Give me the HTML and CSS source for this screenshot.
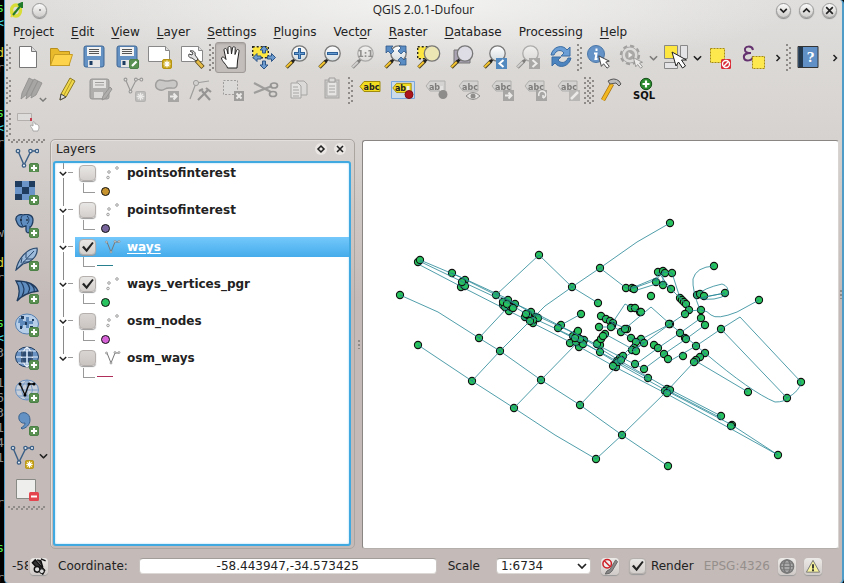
FILE: index.html
```html
<!DOCTYPE html>
<html lang="en">
<head>
<meta charset="utf-8">
<title>QGIS 2.0.1-Dufour</title>
<link rel="stylesheet" href="styles.css">
</head>
<body>
<svg class="defs" aria-hidden="true">
  <defs>
    <linearGradient id="lens" x1="0" y1="0" x2="0" y2="1"><stop offset="0" stop-color="#fff"/><stop offset="1" stop-color="#d3dbde"/></linearGradient>
    <symbol id="plus" viewBox="0 0 10 10"><rect x=".5" y=".5" width="9" height="9" rx="1.5" fill="#5a9152" stroke="#4b8046"/><path d="M5 2v6M2 5h6" stroke="#fff" stroke-width="2"/></symbol>
    <symbol id="star" viewBox="0 0 10 10"><rect x=".5" y=".5" width="9" height="9" rx="1.5" fill="#cda91c" stroke="#b49213"/><path d="M5 1.5v7M1.5 5h7M2.6 2.6l4.8 4.8M7.4 2.6L2.6 7.4" stroke="#fff" stroke-width="1.2"/></symbol>
    <symbol id="handle" viewBox="0 0 24 24"><path d="M1.500 22.500L8 16" stroke="#4d4321" stroke-width="3.600"/><path d="M1.500 22L7 16.700" stroke="#f4c430" stroke-width="2"/><path d="M7 17l3-3" stroke="#222" stroke-width="2.600"/></symbol>
    <symbol id="glass" viewBox="0 0 24 24"><use href="#handle"/><circle cx="14.500" cy="8.500" r="7.700" fill="url(#lens)" stroke="#777" stroke-width="1.300"/></symbol>
    <symbol id="vee" viewBox="0 0 24 24"><path d="M3 3l6 14 7-14h6" fill="none" stroke="#3c5f86" stroke-width="1.400"/><g fill="#e8eef4" stroke="#3c5f86" stroke-width="1.300"><circle cx="3" cy="3" r="1.700"/><circle cx="9" cy="17.500" r="1.700"/><circle cx="15.500" cy="3" r="1.700"/><circle cx="22" cy="3" r="1.700"/></g></symbol>
    <symbol id="tag" viewBox="0 0 24 24"><path d="M2 12.500L6 7.500h16v10H6z" fill="#f2dc21" stroke="#a08b0c"/></symbol>
    <symbol id="gtag" viewBox="0 0 24 24"><path d="M2 12L6 7h15v10H6z" fill="#d3cfcd" stroke="#8a8684"/></symbol>
    <symbol id="down" viewBox="0 0 10 6"><path d="M1 1l4 4 4-4" fill="none" stroke="currentColor" stroke-width="1.700"/></symbol>
    <symbol id="right" viewBox="0 0 6 8"><path d="M1.500 1L4.500 4l-3 3" fill="none" stroke="#222" stroke-width="1.500"/></symbol>
    <symbol id="arrow" viewBox="0 0 14 16"><path d="M1 1l3 12 2.500-3 4 5 2.500-2-4-5 4-1z" fill="#fff" stroke="#333"/></symbol>
    <symbol id="points" viewBox="0 0 16 16"><g fill="#eee" stroke="#999" stroke-width=".9"><circle cx="4" cy="7" r="1.300"/><circle cx="12" cy="3" r="1.300"/><circle cx="3" cy="12.500" r="1.300"/></g></symbol>
    <symbol id="lines" viewBox="0 0 16 16"><path d="M2 3l4 10 4-10h4" fill="none" stroke="#777"/><g fill="#ddd" stroke="#888" stroke-width=".7"><circle cx="1.500" cy="3" r="1"/><circle cx="6" cy="13" r="1"/><circle cx="10" cy="2.500" r="1"/><circle cx="14" cy="2.500" r="1"/></g></symbol>
    <symbol id="globe" viewBox="0 0 24 24"><ellipse cx="12" cy="11" rx="11.500" ry="10" fill="#6b93c4" stroke="#1f3b5e"/><path d="M1 11h22M3 5h18M3 17h18M12 1v20M12 1q-11 10 0 20M12 1q11 10 0 20" fill="none" stroke="#e6edf5" stroke-width="1.200"/></symbol>
  </defs>
</svg>
<div class="desktop">
<pre class="terminal" aria-hidden="true"><b class="g">s</b>
<b class="c">&gt;</b>

<b class="y">d</b>
r


<b class="g">s</b>
<b class="c">&gt;</b>
r





w

<b class="y">d</b>
r


<b class="g">s</b>
<b class="c">&gt;</b>
3
-
1
6
3
1
4
1


r


<b class="g">s</b>

r</pre>
<div class="window">
  <header class="titlebar">
    <div class="title-left">
      <svg width="14" height="16" viewBox="0 0 14 16"><ellipse cx="6" cy="8.500" rx="4.500" ry="5.500" fill="none" stroke="#d9dd38" stroke-width="3.400"/><path d="M1 15l4-6" stroke="#e7d937" stroke-width="2"/><path d="M3 13L12 2M8 3l4-2v5" fill="none" stroke="#227b2d" stroke-width="2"/></svg>
      <button class="round" aria-label="Window menu"><i></i></button>
    </div>
    <h1>QGIS 2.0.1-Dufour</h1>
    <div class="title-right">
      <button class="round" aria-label="Minimize"><svg viewBox="0 0 10 10"><path d="M2 3.500l3 3 3-3"/></svg></button>
      <button class="round" aria-label="Maximize"><svg viewBox="0 0 10 10"><path d="M2 6.500l3-3 3 3"/></svg></button>
      <button class="round" aria-label="Close"><svg viewBox="0 0 10 10"><path d="M2 2l6 6M8 2L2 8"/></svg></button>
    </div>
  </header>
  <nav class="menubar">
    <a href="#">P<u>r</u>oject</a><a href="#"><u>E</u>dit</a><a href="#"><u>V</u>iew</a><a href="#"><u>L</u>ayer</a><a href="#"><u>S</u>ettings</a><a href="#"><u>P</u>lugins</a><a href="#">Vect<u>o</u>r</a><a href="#"><u>R</u>aster</a><a href="#"><u>D</u>atabase</a><a href="#">Processing</a><a href="#"><u>H</u>elp</a>
  </nav>

  <div class="toolbar">
    <span class="grip first"></span>
    <button class="tool" aria-label="New project"><svg viewBox="0 0 24 24"><path d="M3.500 1.500h12l5 5v16h-17z" fill="#fff" stroke="#777"/><path d="M15.500 1.500v5h5" fill="#ddd" stroke="#777"/></svg></button>
    <button class="tool" aria-label="Open"><svg viewBox="0 0 24 24"><path d="M1.500 20.500v-17h7l2 3h10v14z" fill="#e9ba2c" stroke="#b88f1d"/><path d="M1.500 20.500l4-11h18l-3.500 11z" fill="#fcd34a" stroke="#c79d24"/></svg></button>
    <button class="tool" aria-label="Save"><svg viewBox="0 0 24 24"><rect x="2" y="1" width="20" height="21" rx="2" fill="#6592c4" stroke="#3f6792"/><path d="M5 2h14v9H5z" fill="#f2f2f2"/><path d="M7 4.500h10M7 6.500h10M7 8.500h10" stroke="#555"/><path d="M6 15h12v7H6z" fill="#e6e6e6"/><path d="M7.500 16h3v4h-3z" fill="#1d3c62"/></svg></button>
    <button class="tool" aria-label="Save as"><svg viewBox="0 0 24 24"><rect x="2" y="1" width="20" height="21" rx="2" fill="#6592c4" stroke="#3f6792"/><path d="M5 2h14v9H5z" fill="#f2f2f2"/><path d="M7 4.500h10M7 6.500h10M7 8.500h10" stroke="#555"/><path d="M6 15h10v7H6z" fill="#e6e6e6"/><path d="M7.500 16h3v4h-3z" fill="#1d3c62"/><rect x="14.500" y="14.500" width="9" height="9" rx="1.500" fill="#5a9152" stroke="#4b8046"/><path d="M17 21l4.500-4.500" stroke="#fff" stroke-width="2.200"/></svg></button>
    <button class="tool" aria-label="New print composer"><svg viewBox="0 0 24 24"><path d="M.5 1.500h17l4 4v11H.5z" fill="#fff" stroke="#888"/><path d="M17.500 1.500v4h4" fill="#ddd" stroke="#888"/><use href="#star" x="14" y="14" width="10" height="10"/></svg></button>
    <button class="tool" aria-label="Composer manager"><svg viewBox="0 0 24 24"><path d="M.5 1.500h17l4 4v11H.5z" fill="#fff" stroke="#888"/><path d="M17.500 1.500v4h4" fill="#ddd" stroke="#888"/><path d="M9 6c3-1 6 1 5 4l3 4-2 2-4-3c-3 0-4-2-3-4l3 1 1-2z" fill="#e2e2e2" stroke="#444"/><path d="M15.500 15.500l6.500 7" stroke="#5b4a1a" stroke-width="4.400"/><path d="M16 16l5.500 6" stroke="#e7bd4a" stroke-width="2.800"/></svg></button>
    <span class="grip"></span>
    <button class="tool pressed" aria-label="Pan map" aria-pressed="true"><svg viewBox="0 0 24 24"><path d="M8.500 23c-.5-3-6-7-6-10 1-2 3-.5 4.500 1.500L5 5c0-2 2.500-2 3 0l1 4V3c0-2 3-2 3 0l.5 6 1-6c.5-2 3-1.500 2.700.5L16 9.500l1.500-4c.7-1.700 3-1 2.500 1L18.500 16 18 23z" fill="#fff" stroke="#222"/></svg></button>
    <button class="tool" aria-label="Pan to selection"><svg viewBox="0 0 24 24"><path d="M.7 1.700h15.600v11H.7z" fill="#fde63f" stroke="#222" stroke-width="1.400" stroke-dasharray="2 2"/><path d="M12 1l4 4h-2.500v3h-3V5H8zM12 24l4-4h-2.500v-4h-3v4H8zM1 12.500l4-4V11h4v3H5v2.500zM23.500 12.500l-4-4V11h-4v3h4v2.500z" fill="#6d9bd0" stroke="#2e5787"/></svg></button>
    <button class="tool" aria-label="Zoom in"><svg viewBox="0 0 24 24"><use href="#glass"/><path d="M14.500 3v11M9 8.500h11" stroke="#2c6099" stroke-width="3"/><path d="M14.500 4v9M10 8.500h9" stroke="#659dd3" stroke-width="1"/></svg></button>
    <button class="tool" aria-label="Zoom out"><svg viewBox="0 0 24 24"><use href="#glass"/><path d="M9 8.500h11" stroke="#2c6099" stroke-width="3"/><path d="M10 8.500h9" stroke="#659dd3"/></svg></button>
    <button class="tool off" aria-label="Zoom actual size"><svg viewBox="0 0 24 24"><use href="#glass"/><text x="14.500" y="12" text-anchor="middle" class="t9">1:1</text></svg></button>
    <button class="tool" aria-label="Zoom full"><svg viewBox="0 0 24 24"><use href="#glass"/><path d="M2 1h7L7 3l3 3-3 3-3-3-2 2zM22 1v7l-2-2-3 3-3-3 3-3-2-2zM22 20h-7l2-2-3-3 3-3 3 3 2-2z" fill="#5a8dc4" stroke="#2e5787" stroke-width=".8"/></svg></button>
    <button class="tool" aria-label="Zoom to selection"><svg viewBox="0 0 24 24"><path d="M.7 1.700h13.600v12H.7z" fill="#fde63f" stroke="#222" stroke-width="1.400" stroke-dasharray="2 2"/><use href="#handle"/><circle cx="15" cy="8.500" r="7.700" fill="#ece5b4" stroke="#777" stroke-width="1.300"/></svg></button>
    <button class="tool" aria-label="Zoom to layer"><svg viewBox="0 0 24 24"><path d="M4 5h16v13H4z" fill="#aaa3b4" stroke="#777"/><use href="#handle"/><circle cx="15" cy="8.500" r="7.700" fill="#dedce5" stroke="#777" stroke-width="1.300"/></svg></button>
    <button class="tool" aria-label="Zoom last"><svg viewBox="0 0 24 24"><use href="#glass"/><path d="M13 13h11v11H13z" fill="#5289bf"/><path d="M20.500 15l-4 3.500 4 3.500" fill="none" stroke="#fff" stroke-width="2"/></svg></button>
    <button class="tool off" aria-label="Zoom next"><svg viewBox="0 0 24 24"><use href="#glass"/><path d="M13 13h11v11H13z" fill="#777"/><path d="M16.500 15l4 3.500-4 3.500" fill="none" stroke="#fff" stroke-width="2"/></svg></button>
    <button class="tool" aria-label="Refresh"><svg viewBox="0 0 24 24"><path d="M2 10C4 1 14-1 18 5l3-3v9h-9l3-3C12 4 7 5 5 10z" fill="#6a9ed4" stroke="#3c6da3"/><path d="M22 13c-2 9-12 11-16 5l-3 3v-9h9l-3 3c3 4 8 3 10-2z" fill="#4c84bf" stroke="#3c6da3"/></svg></button>
    <span class="grip"></span>
    <button class="tool" aria-label="Identify"><svg viewBox="0 0 24 24"><circle cx="9" cy="9" r="8.500" fill="#6593c8" stroke="#4b77a8"/><path d="M9.500 3.500v2.600M7 8.500h2.500l-1 5.500h2" stroke="#fff" stroke-width="2" fill="none"/><use href="#arrow" x="10" y="10" width="14" height="14"/></svg></button>
    <button class="tool off" aria-label="Run action"><svg viewBox="0 0 24 24"><circle cx="10" cy="10" r="8.700" fill="none" stroke="#666" stroke-width="3" stroke-dasharray="4 2.800"/><circle cx="10" cy="10" r="8" fill="#ddd" stroke="#777"/><circle cx="10" cy="10" r="5" fill="#777"/><path d="M8.500 7l4 3-4 3z" fill="#fff"/><use href="#arrow" x="12" y="12" width="12" height="12"/></svg></button>
    <button class="drop off" aria-label="Action menu"><svg viewBox="0 0 10 6"><use href="#down"/></svg></button>
    <button class="tool" aria-label="Select features"><svg viewBox="0 0 24 24"><path d="M.5.5h13v13H.5z" fill="#fde63f" stroke="#888"/><path d="M16.500.5h7v13h-7zM.5 17.500h13v6H.5z" fill="#e4e4e6" stroke="#888"/><path d="M8 7l4 14 2.500-4 4 6 3-2-4-6h5z" fill="#fff" stroke="#222"/></svg></button>
    <button class="drop" aria-label="Selection menu"><svg viewBox="0 0 10 6"><use href="#down"/></svg></button>
    <button class="tool" aria-label="Deselect"><svg viewBox="0 0 24 24"><path d="M2.500 3.500h14v14h-14z" fill="#fde84e" stroke="#a58b10" stroke-dasharray="2 1"/><rect x="13" y="14" width="10" height="10" rx="1.500" fill="#d92b36"/><circle cx="18" cy="19" r="3.500" fill="none" stroke="#fff" stroke-width="1.400"/><path d="M15.500 21.500l5-5" stroke="#fff" stroke-width="1.400"/></svg></button>
    <button class="tool" aria-label="Select by expression"><svg viewBox="0 0 24 24"><path d="M12 5C11 0 3 1 4 5c0 2 3 3 6 3-4 0-8 1-7 5 1 4 9 3 9-2" fill="none" stroke="#65336f" stroke-width="2"/><path d="M11.500 11.500h12v12h-12z" fill="#fde84e" stroke="#a58b10" stroke-dasharray="2 1"/></svg></button>
    <button class="more" aria-label="More attribute tools"><svg viewBox="0 0 6 8"><use href="#right"/></svg></button>
    <span class="grip"></span>
    <button class="tool" aria-label="Help contents"><svg viewBox="0 0 24 24"><path d="M2 1.500h20v21H2z" fill="#6090c6" stroke="#333"/><path d="M2.500 2H7v20H2.500z" fill="#24384d"/><text x="14.500" y="16.500" text-anchor="middle" class="q">?</text></svg></button>
    <button class="more end" aria-label="More help tools"><svg viewBox="0 0 6 8"><use href="#right"/></svg></button>
  </div>

  <div class="toolbar">
    <span class="grip first"></span>
    <button class="tool wide off" aria-label="Current edits"><svg viewBox="0 0 24 24"><g fill="#777" stroke="#444" stroke-width=".8"><path d="M2 21l1-6L10 0l4 2-7 15z"/><path d="M7 21l1-6 7-14 4 2-7 14z"/><path d="M12 20l1-5 6-12 4 2-6 12z"/></g></svg><svg class="mini" viewBox="0 0 10 6"><use href="#down"/></svg></button>
    <button class="tool" aria-label="Toggle editing"><svg viewBox="0 0 24 24"><path d="M4 22l1-6L14 0l5 3-9 16z" fill="#f0d84a" stroke="#8c7920"/><path d="M8 17l8-15" stroke="#b59c25"/><path d="M4 22l1-6 5 3z" fill="#ddd" stroke="#444"/></svg></button>
    <button class="tool off" aria-label="Save edits"><svg viewBox="0 0 24 24"><rect x="1" y="1" width="19" height="20" rx="2" fill="#888" stroke="#555"/><path d="M4 2h13v8H4z" fill="#eee"/><path d="M6 4.500h9M6 7h9" stroke="#666"/><path d="M5 14h9v6H5z" fill="#ddd"/><path d="M13 22l1-4 7-9 2 2-6 9z" fill="#888" stroke="#555"/></svg></button>
    <button class="tool off" aria-label="Add feature"><svg viewBox="0 0 24 24"><use href="#vee" x="0" y="-1" width="22" height="20"/><use href="#star" x="13" y="13" width="11" height="11"/></svg></button>
    <button class="tool off" aria-label="Move feature"><svg viewBox="0 0 24 24"><path d="M1 5c3-6 8-1 12-2s10-2 9 4-8 1-12 4S-1 11 1 5z" fill="#bbb" stroke="#666" stroke-width="1.500"/><path d="M13 13h11v11H13z" fill="#777"/><path d="M15 18.500h6M18.500 15.500l3 3-3 3" stroke="#fff" stroke-width="2" fill="none"/></svg></button>
    <button class="tool off" aria-label="Node tool"><svg viewBox="0 0 24 24"><path d="M2 21L8 5l13-2" fill="none" stroke="#666" stroke-width="1.200"/><circle cx="8" cy="5" r="2.600" fill="#ccc" stroke="#666"/><path d="M10 22L20 12M14 13l8 9M18 10l5 4M11 13l4-2" stroke="#555" stroke-width="2.200"/></svg></button>
    <button class="tool off" aria-label="Delete selected"><svg viewBox="0 0 24 24"><path d="M2.500 2.500h14v14h-14z" fill="#ddd" stroke="#666" stroke-dasharray="2 1.500"/><path d="M13 13h10v10H13z" fill="#666"/><path d="M15.500 15.500l5 5M20.500 15.500l-5 5" stroke="#fff" stroke-width="2"/></svg></button>
    <button class="tool off" aria-label="Cut"><svg viewBox="0 0 24 24"><path d="M0 5l17 9M0 15l18-7" stroke="#666" stroke-width="2.200"/><ellipse cx="20" cy="7.500" rx="3.500" ry="2.500" fill="none" stroke="#555" stroke-width="1.700"/><ellipse cx="19" cy="16" rx="3.500" ry="2.500" fill="none" stroke="#555" stroke-width="1.700"/></svg></button>
    <button class="tool off" aria-label="Copy"><svg viewBox="0 0 24 24"><path d="M10 3h7l3 3v11H10z" fill="#ddd" stroke="#777"/><path d="M4 5h7l3 3v12H4z" fill="#eee" stroke="#777"/><path d="M6 9h5M6 12h6M6 15h6M6 18h6" stroke="#777"/></svg></button>
    <button class="tool off" aria-label="Paste"><svg viewBox="0 0 24 24"><rect x="5" y="2" width="14" height="18" fill="#bbb" stroke="#777"/><path d="M7 4h10v14H7z" fill="#f3f3f3" stroke="#888"/><path d="M9 0h6v4H9z" fill="#ddd" stroke="#666"/><path d="M9 8h6M9 11h6M9 14h6" stroke="#777"/></svg></button>
    <span class="grip"></span>
    <button class="tool" aria-label="Labeling"><svg viewBox="0 0 24 24"><use href="#tag" y="-4" width="24" height="24"/><text x="13.500" y="11.500" text-anchor="middle" class="t8">abc</text></svg></button>
    <button class="tool" aria-label="Pin labels"><svg viewBox="0 0 24 24"><path d="M.5 3.500h23v17H.5z" fill="#cbdaea" stroke="#78a7e0"/><use href="#tag" x="0" y="-2.500" width="22" height="24"/><text x="9.500" y="12.500" text-anchor="middle" class="t8">ab</text><path d="M17 8v8" stroke="#eee" stroke-width="3"/><circle cx="18" cy="16.500" r="4" fill="#ad151d" stroke="#7d1116"/></svg></button>
    <button class="tool off" aria-label="Highlight pinned labels"><svg viewBox="0 0 24 24"><use href="#gtag" y="-4" width="24" height="24"/><text x="10.500" y="11.500" text-anchor="middle" class="t8">ab</text><path d="M17.500 8v8" stroke="#eee" stroke-width="3"/><circle cx="19" cy="16.500" r="4.500" fill="#444"/></svg></button>
    <button class="tool off" aria-label="Show or hide labels"><svg viewBox="0 0 24 24"><use href="#gtag" y="-4" width="24" height="24"/><text x="13" y="11.500" text-anchor="middle" class="t8">abc</text><path d="M9 18q7-7 14 0-7 7-14 0z" fill="#eee" stroke="#444"/><circle cx="16" cy="18" r="2.500" fill="#444"/></svg></button>
    <button class="tool off" aria-label="Move label"><svg viewBox="0 0 24 24"><use href="#gtag" y="-4" width="24" height="24"/><text x="13" y="11.500" text-anchor="middle" class="t8">abc</text><path d="M13 12h11v11H13z" fill="#777"/><path d="M15 17.500h6M18.500 14.500l3 3-3 3" stroke="#fff" stroke-width="2" fill="none"/></svg></button>
    <button class="tool off" aria-label="Rotate label"><svg viewBox="0 0 24 24"><use href="#gtag" y="-4" width="24" height="24"/><text x="13" y="11.500" text-anchor="middle" class="t8">abc</text><path d="M13 12h11v11H13z" fill="#777"/><path d="M20 20a3.500 3.500 0 1 0-4-2M20 20v-3" stroke="#fff" stroke-width="1.500" fill="none"/></svg></button>
    <button class="tool off" aria-label="Change label"><svg viewBox="0 0 24 24"><use href="#gtag" y="-4" width="24" height="24"/><text x="13" y="11.500" text-anchor="middle" class="t8">abc</text><path d="M13 12h11v11H13z" fill="#999"/><path d="M15 21l7-7" stroke="#fff" stroke-width="2.500"/></svg></button>
    <span class="grip double"></span>
    <button class="tool" aria-label="Build plugin"><svg viewBox="0 0 24 24"><path d="M4 22L13 6" stroke="#a46b0b" stroke-width="4.500"/><path d="M4 22L13 6" stroke="#f2b822" stroke-width="3"/><path d="M9 3q6-4 11 0l2 3-2 2-3-3-6 1z" fill="#bbb" stroke="#555"/></svg></button>
    <button class="tool" aria-label="Add SQL layer"><svg viewBox="0 0 24 24"><circle cx="14" cy="6" r="5.700" fill="#2a8c2f" stroke="#174f1a"/><path d="M14 2.500v7M10.500 6h7" stroke="#fff" stroke-width="2.200"/><text x="12" y="21" text-anchor="middle" class="sql">SQL</text></svg></button>
  </div>

  <div class="toolbar short">
    <span class="grip first"></span>
    <button class="tool" aria-label="Touch zoom"><svg viewBox="0 0 24 24"><path d="M1.500 2.500h14v7h-14z" fill="#dedcda" stroke="#b3afad"/><path d="M15 7v3" stroke="#c33b4c" stroke-width="2"/><path d="M17 20c0-3-4-5-2-6l2 1v-4c1-1 2 0 2 2 2 0 4 1 4 3s-1 3-1 4z" fill="#fff" stroke="#999" stroke-width=".8"/></svg></button>
  </div>

  <main class="workspace">
    <aside class="sidebar">
      <span class="hgrip"></span>
      <button class="layer-tool" aria-label="Add vector layer"><svg viewBox="0 0 24 24"><use href="#vee"/><use href="#plus" x="14" y="15" width="10" height="10"/></svg></button>
      <button class="layer-tool" aria-label="Add raster layer"><svg viewBox="0 0 24 24"><path d="M0 0h20v19H0z" fill="#6b95c8"/><path d="M0 0h7v6H0zM14 0h6v6h-6zM7 6h7v7H7zM0 13h7v6H0z" fill="#1f3b5e"/><use href="#plus" x="14" y="14" width="10" height="10"/></svg></button>
      <button class="layer-tool" aria-label="Add PostGIS layer"><svg viewBox="0 0 24 24"><path d="M1 6C0 1 6 0 8 1c3-1 10-1 10 5 0 4-2 7-3 7v4c-1 3-4 2-4-1v-4c-2 0-2 1-4 1-4 0-5-4-6-7z" fill="#5f8dc0" stroke="#1f3b5e" stroke-width="1.300"/><path d="M7 2c-2 3-1 8 1 10M12 2c3 3 2 6 0 8" fill="none" stroke="#1f3b5e"/><circle cx="6" cy="6" r=".8"/><circle cx="12" cy="6" r=".8"/><use href="#plus" x="14" y="14" width="10" height="10"/></svg></button>
      <button class="layer-tool" aria-label="Add SpatiaLite layer"><svg viewBox="0 0 24 24"><path d="M1 23C3 12 12 1 22 1c1 5-2 13-14 16z" fill="#9ebbdb" stroke="#29486c" stroke-width="1.200"/><path d="M1 23L19 4M6 16l1-5M11 11V6M11 12l7 0M8 15l6 0" fill="none" stroke="#29486c"/><use href="#plus" x="14" y="14" width="10" height="10"/></svg></button>
      <button class="layer-tool" aria-label="Add MSSQL layer"><svg viewBox="0 0 24 24"><path d="M1 1c8 0 18 1 22 10-7 1-15 3-21 10C5 14 5 7 1 1z" fill="#5f8dc0" stroke="#1f3b5e" stroke-width="1.300"/><path d="M6 2c4 5 4 9 1 14M11 2c4 4 5 7 2 11M16 4c3 3 4 5 3 8" fill="none" stroke="#1f3b5e" stroke-width="1.200"/><use href="#plus" x="14" y="14" width="10" height="10"/></svg></button>
      <button class="layer-tool" aria-label="Add WMS layer"><svg viewBox="0 0 24 24"><ellipse cx="12" cy="11" rx="11.500" ry="10" fill="#b7cee8" stroke="#5580b1"/><path d="M4 5h4v3h3V4h3v4h4v3h-4v4h-3v-3H8v3H5v-5H3z" fill="#5d8abb"/><path d="M6 3h3v3H6zM15 13h3v3h-3zM10 9h2v3h-2zM5 13h2v3H5zM17 6h2v2h-2z" fill="#1f3b5e"/><use href="#plus" x="14" y="14" width="10" height="10"/></svg></button>
      <button class="layer-tool" aria-label="Add WCS layer"><svg viewBox="0 0 24 24"><use href="#globe"/><path d="M6 5.500h5v5H6zM13 5.500h5v5h-5zM6 12h5v4.500H6zM13 12h5v4.500h-5z" fill="#1f3b5e" opacity=".8"/><use href="#plus" x="14" y="14" width="10" height="10"/></svg></button>
      <button class="layer-tool" aria-label="Add WFS layer"><svg viewBox="0 0 24 24"><ellipse cx="12" cy="11" rx="11.500" ry="10" fill="#c8cfd9" stroke="#6991c0"/><path d="M1 11h22M3 5h18M3 17h18M12 1v20M12 1q-11 10 0 20M12 1q11 10 0 20" fill="none" stroke="#769bc6"/><path d="M5 5l5 11 4-11h5" fill="none" stroke="#111" stroke-width="1.400"/><g><circle cx="5" cy="5" r="1.500"/><circle cx="10" cy="16" r="1.500"/><circle cx="14" cy="5" r="1.500"/><circle cx="19" cy="5" r="1.500"/></g><use href="#plus" x="14" y="14" width="10" height="10"/></svg></button>
      <button class="layer-tool" aria-label="Add delimited text layer"><svg viewBox="0 0 24 24"><path d="M4 4c1-5 11-5 11 4 0 5-4 8-8 9l-1-1c3-2 4-3 4-5-4 1-7-3-6-7z" fill="#6592c4" stroke="#38628f"/><use href="#plus" x="14" y="14" width="10" height="10"/></svg></button>
      <button class="layer-tool menu" aria-label="New shapefile layer"><svg viewBox="0 0 24 24"><use href="#vee"/><use href="#star" x="15" y="15" width="9" height="9"/></svg><svg class="side-chevron" viewBox="0 0 10 6"><use href="#down"/></svg></button>
      <button class="layer-tool" aria-label="Remove layer"><svg viewBox="0 0 24 24"><path d="M1.500 1.500h19v19h-19z" fill="#eeeeec" stroke="#888a85"/><rect x="14" y="14" width="10" height="9" rx="1.500" fill="#e4444e"/><path d="M16 18.500h6" stroke="#fff" stroke-width="2"/></svg></button>
      <span class="hgrip"></span>
    </aside>

    <section class="dock">
      <header class="dock-title"><h2>Layers</h2>
        <button aria-label="Float panel"><svg viewBox="0 0 10 10"><path d="M5 2.500l2.500 2.500L5 7.500 2.500 5z"/></svg></button>
        <button aria-label="Close panel"><svg viewBox="0 0 10 10"><path d="M2.500 2.500l5 5M7.500 2.500l-5 5"/></svg></button>
      </header>
      <ul class="tree">
        <li><div class="row"><svg class="twist" viewBox="0 0 10 6"><use href="#down"/></svg><input type="checkbox" id="l1"><svg class="kind" viewBox="0 0 16 16"><use href="#points"/></svg><label for="l1">pointsofinterest</label></div><div class="sym"><i class="dot ochre"></i></div></li>
        <li><div class="row"><svg class="twist" viewBox="0 0 10 6"><use href="#down"/></svg><input type="checkbox" id="l2"><svg class="kind" viewBox="0 0 16 16"><use href="#points"/></svg><label for="l2">pointsofinterest</label></div><div class="sym"><i class="dot violet"></i></div></li>
        <li><div class="row selected"><svg class="twist" viewBox="0 0 10 6"><use href="#down"/></svg><input type="checkbox" id="l3" checked><svg class="kind" viewBox="0 0 16 16"><use href="#lines"/></svg><label for="l3">ways</label></div><div class="sym"><i class="dash teal"></i></div></li>
        <li><div class="row"><svg class="twist" viewBox="0 0 10 6"><use href="#down"/></svg><input type="checkbox" id="l4" checked><svg class="kind" viewBox="0 0 16 16"><use href="#points"/></svg><label for="l4">ways_vertices_pgr</label></div><div class="sym"><i class="dot green"></i></div></li>
        <li><div class="row"><svg class="twist" viewBox="0 0 10 6"><use href="#down"/></svg><input type="checkbox" class="dim" id="l5"><svg class="kind" viewBox="0 0 16 16"><use href="#points"/></svg><label for="l5">osm_nodes</label></div><div class="sym"><i class="dot pink"></i></div></li>
        <li><div class="row"><svg class="twist" viewBox="0 0 10 6"><use href="#down"/></svg><input type="checkbox" class="dim" id="l6"><svg class="kind" viewBox="0 0 16 16"><use href="#lines"/></svg><label for="l6">osm_ways</label></div><div class="sym"><i class="dash crimson"></i></div></li>
      </ul>
    </section>
    <span class="splitter"></span>
    <section class="canvas" aria-label="Map">
      <svg viewBox="363 141 475 407" preserveAspectRatio="xMinYMin meet">
        <defs><marker id="n" viewBox="0 0 10 10" refX="5" refY="5" markerWidth="10" markerHeight="10" markerUnits="userSpaceOnUse"><circle cx="5" cy="5" r="3.600" fill="#28c35e" stroke="#111" stroke-width="1.100"/></marker></defs>
        <path class="nodes" d="M418 262L420 260L452 273L400 295L418 345L496 295L539 255L479 338L500 351L465 280L461 287L463 284L465 286L462 282L503 305L508 300L515 304L509 311L505 307L511 307L513 308L503 302L507 304L525 317L531 312L536 317L533 323L528 315L538 318L533 320L526 314L530 321L670 223L600 268L572 287L598 303L581 314L561 325L558 328L626 288L632 288L634 289L658 272L663 271L665 273L672 273L656 282L663 285L671 289L651 296L680 298L682 300L684 302L686 304L689 310L685 314L631 308L635 308L640 312L641 312L601 316L606 319L610 321L613 323L612 326L611 327L599 327L621 332L627 329L625 329L605 334L670 324L669 324L680 333L685 338L686 339L696 346L631 338L641 339L636 342L644 343L654 345L658 348L664 354L668 359L634 348L632 350L636 351L598 343L600 345L597 344L601 339L603 336L600 352L573 336L577 333L578 331L570 343L584 340L579 347L576 342L583 344L580 339L575 338L714 266L697 295L700 294L704 296L725 293L759 300L701 310L701 318L705 325L721 329L705 353L700 357L696 360L694 362L683 356L748 392L801 382L787 398L667 389L665 391L670 390L667 393L721 416L732 425L731 426L648 378L635 364L644 369L472 381L514 408L541 380L580 405L596 459L622 435L668 466L778 455L614 365L617 361L620 358L623 356L616 367L618 362L613 366L621 360"/>
        <g class="roads">
          <path d="M400 295L438 312L479 338L500 351L541 380L580 405L622 435L668 466M418 345L472 381L514 408L555 435L596 459L622 435L667 391L694 362L705 353M472 381L500 351L531 320L545 306L572 287L600 268L637 242L670 223M479 338L508 307M496 295L539 255L572 287L598 303M514 408L541 380L578 342M580 405L617 366M600 268L626 288"/>
          <path d="M420 260L465 279L508 299L533 314L578 335L617 359L667 388L721 416M419 261L465 283L508 303L533 318L578 339L617 363L667 391L732 425L778 455M418 264L462 287L509 311L578 346L617 368L667 394L733 430L778 455M452 273L496 295L533 312L578 335L644 369M667 390L721 418"/>
          <path d="M558 330L600 352L648 378M561 325L581 314"/>
          <path d="M626 288L634 288L656 280L663 272L672 273L680 298L686 304L689 310M632 288L656 278L671 289L680 298M634 291L656 284L663 285M658 272L671 289M663 271L663 285M656 282L658 272"/>
          <path d="M714 266Q696 267 693 279Q692 290 700 310L689 311L670 324L644 343L617 363M701 310Q708 311 711 315Q717 320 737 312L759 300M697 295Q704 288 722 284Q729 286 728 294Q714 302 700 298L725 293L704 297M705 353Q751 392 775 402Q785 402 787 398L721 329M787 398Q800 391 801 382L740 317L721 329L696 346L668 362M701 318L680 333L658 348L636 364M705 325L686 339L664 354L644 369M640 312L625 304L611 325M651 307L670 324L705 353M651 307L621 332M601 316L613 323L627 329M599 327L611 327M694 360L748 392M611 325L631 338L644 343L634 349M617 361L636 342L670 324M605 334L636 351"/>
        </g>
      </svg>
    </section>
    <span class="edge"></span>
  </main>

  <footer class="status">
    <span class="clip">-58</span>
    <button class="sq" aria-label="Toggle extents"><svg viewBox="0 0 18 18"><path d="M2 5l3-3 10 11-2 4zM7 2l4 1 2 7M11 1l5 2" fill="#333" stroke="#111" stroke-width="1.500"/><circle cx="7" cy="12" r="3" fill="#ddd" stroke="#111" stroke-width="1.500"/><circle cx="12" cy="14" r="2.500" fill="#ddd" stroke="#111"/></svg></button>
    <label for="coord" class="l-coord">Coordinate:</label>
    <input id="coord" class="field" type="text" value="-58.443947,-34.573425">
    <label for="scale">Scale</label>
    <span class="combo"><select id="scale"><option>1:6734</option></select><svg viewBox="0 0 10 6"><use href="#down"/></svg></span>
    <button class="sq stop" aria-label="Stop rendering"><svg viewBox="0 0 18 18"><path d="M4 17q1-4 5-5l6-10 2 2-6 10q-2 3-7 3z" fill="#888" stroke="#666"/><circle cx="6" cy="6" r="4.500" fill="#eee" stroke="#ce2027" stroke-width="1.600"/><path d="M3 3l6 6" stroke="#ce2027" stroke-width="1.600"/></svg></button>
    <input type="checkbox" id="render" checked><label for="render" class="l-render">Render</label>
    <span class="epsg">EPSG:4326</span>
    <button class="sq" aria-label="CRS status"><svg viewBox="0 0 18 18"><circle cx="9" cy="9" r="7" fill="#aaa" stroke="#777" stroke-width="1.500"/><ellipse cx="9" cy="9" rx="3.500" ry="7" fill="none" stroke="#777" stroke-width="1.500"/><path d="M2 9h14M3 5.500h12M3 12.500h12" stroke="#777"/></svg></button>
    <button class="sq" aria-label="Messages"><svg viewBox="0 0 18 18"><path d="M9 2.500L16 15H2z" fill="#f6f39b" stroke="#777"/><path d="M9 6.500v4.500M9 12v2" stroke="#333" stroke-width="2"/></svg></button>
  </footer>
</div>
</div>
</body>
</html>
```
FILE: styles.css
```css
* { box-sizing: border-box; }
body {
  margin: 0;
  background: #000;
  color: #222;
  font: 12px/16px "DejaVu Sans", sans-serif;
}
button { padding: 0; border: 0; background: none; color: inherit; font: inherit; }
h1, h2, ul { margin: 0; padding: 0; font: inherit; list-style: none; }
svg { display: block; }
.defs { position: absolute; width: 0; height: 0; }

.desktop { display: grid; grid-template-columns: 4px minmax(0, 1fr); min-height: 100vh; }
.terminal {
  margin: 0;
  width: 4px;
  height: 100%;
  overflow: hidden;
  direction: rtl;
  color: #8a8a8a;
  font: 13px/15px "DejaVu Sans Mono", monospace;
  contain: size;
}
.terminal b { font-weight: 400; }
.g { color: #4be64b; }
.c { color: #40d8e0; }
.y { color: #d6d03a; }

.window {
  display: flex;
  flex-direction: column;
  border: 1px solid #4f9cc9;
  border-top: 0;
  border-right-width: 2px;
  border-radius: 0 4px 5px 5px;
  background:
    radial-gradient(ellipse 380px 70px at 50% 0, #f3f3f2, rgba(243, 243, 242, 0)),
    linear-gradient(#dfdedc, #d6d2cf 140px, #c4bbb8 300px);
}

.titlebar { display: grid; grid-template-columns: 1fr auto 1fr; align-items: center; height: 20px; padding: 0 5px; }
.titlebar h1 { font: 12px/18px "Open Sans", sans-serif; }
.title-left, .title-right { display: flex; align-items: center; gap: 8px; }
.title-right { justify-content: flex-end; }
.round {
  display: grid;
  place-items: center;
  width: 15px;
  height: 15px;
  border: 1px solid #999;
  border-radius: 50%;
  background: linear-gradient(#fafafa, #cfcdcb);
  box-shadow: 0 1px 1px #888;
}
.round svg { width: 11px; height: 11px; fill: none; stroke: #222; stroke-width: 1.5; }
.round i { width: 2px; height: 2px; background: #999; }

.menubar { display: flex; gap: 17px; height: 21px; padding: 4px 8px 0; }
.menubar a { color: inherit; text-decoration: none; }
.menubar u { text-underline-offset: 2px; }

.toolbar { display: flex; align-items: center; height: 33px; }
.toolbar.short { height: 32px; }
.tool { flex: none; display: grid; place-items: center; width: 33px; height: 33px; padding-bottom: 1px; }
.tool svg { width: 24px; height: 24px; overflow: visible; }
.tool.wide { position: relative; width: 40px; padding-right: 1px; }
.tool .mini { position: absolute; right: 4px; bottom: 5px; width: 8px; height: 5px; }
.tool.pressed { height: 31px; width: 31px; margin: 0 1px; border: 1px solid #9f9a97; border-radius: 3px; background: #c3bebb; box-shadow: inset 0 1px 2px #aaa5a2; }
.off { opacity: .5; filter: grayscale(1); }
.drop { flex: none; display: grid; place-items: center; width: 11px; height: 33px; }
.drop svg { width: 9px; height: 6px; }
.more { flex: none; display: grid; place-items: center; width: 17px; height: 33px; }
.more svg { width: 6px; height: 8px; }
.more.end { margin-left: auto; width: 14px; }
.grip {
  flex: none;
  width: 5px;
  height: 27px;
  background:
    radial-gradient(circle at 1px 1px, #8f8b89 1px, transparent 1px) 0 0 / 5px 5px,
    radial-gradient(circle at 1px 1px, #8f8b89 1px, transparent 1px) 3px 3px / 5px 5px;
}
.grip.first { margin-left: 1px; }
.grip.double { width: 10px; }
.hgrip {
  flex: none;
  width: 38px;
  height: 4px;
  margin-left: 3px;
  background:
    radial-gradient(circle at 1px 1px, #8f8b89 1px, transparent 1px) 0 0 / 5px 5px,
    radial-gradient(circle at 1px 1px, #8f8b89 1px, transparent 1px) 3px 2px / 5px 5px;
}
.t9 { font: bold 9px "DejaVu Sans", sans-serif; fill: #444; }
.t8 { font: bold 8px "DejaVu Sans", sans-serif; fill: #222; }
.q { font: bold 13px "DejaVu Serif", serif; fill: #fff; }
.sql { font: bold 10px "DejaVu Sans", sans-serif; fill: #111; }

.workspace { flex: 1; display: grid; grid-template-columns: 45px 305px 7px minmax(0, 1fr) 3px; min-height: 409px; }
.sidebar { display: flex; flex-direction: column; }
.layer-tool { position: relative; flex: none; display: grid; place-items: center; width: 44px; height: 33px; }
.layer-tool svg { width: 24px; height: 24px; }
.layer-tool.menu { padding-right: 10px; }
.layer-tool .side-chevron { position: absolute; right: 1px; top: 13px; width: 9px; height: 6px; }

.dock {
  display: flex;
  flex-direction: column;
  border: 1px solid #aba5a2;
  border-radius: 5px;
  box-shadow: inset 1px 1px #e2dfdd;
  padding: 1px 3px 2px 2px;
}
.dock-title { display: flex; align-items: center; gap: 7px; height: 20px; padding: 0 5px 4px 3px; }
.dock-title h2 { flex: 1; }
.dock-title button { width: 12px; height: 12px; border-radius: 50%; background: #e9e6e4; }
.dock-title svg { width: 12px; height: 12px; fill: none; stroke: #222; stroke-width: 1.3; }
.tree {
  flex: 1;
  border: 2px solid #3fa9e0;
  border-radius: 3px;
  background: linear-gradient(#8a8a8a, #8a8a8a) 8px 0 / 1px 194px no-repeat #fff;
  box-shadow: inset 0 0 2px #8fd3f7;
}
.row { position: relative; display: flex; align-items: center; height: 20px; padding-left: 4px; font-weight: 700; }
.row::before { content: ""; position: absolute; left: 13px; top: 9px; width: 5px; height: 1px; background: #999; }
.row.selected { background: linear-gradient(#74c8fb, #45aceb) 20px 0 no-repeat; color: #fff; }
.row.selected label { text-decoration: underline; text-underline-offset: 2px; }
.twist { width: 8px; height: 9px; padding: 2px 0; background: #fff; color: #222; }
.row input { margin: 0 9px 0 12px; }
.kind { width: 16px; height: 16px; margin-right: 6px; }
.sym { position: relative; display: flex; align-items: center; height: 17px; padding-left: 42px; }
.sym::before { content: ""; position: absolute; left: 28px; top: 0; width: 11px; height: 9px; border: solid #999; border-width: 0 0 1px 1px; }
.dot { width: 9px; height: 9px; margin-left: 4px; border: 1px solid #111; border-radius: 50%; }
.ochre { background: #c6932e; }
.violet { background: #76649b; }
.green { background: #28c35e; }
.pink { background: #d862d8; }
.dash { width: 16px; height: 1px; }
.teal { background: #287f8d; }
.crimson { background: #b02e5a; }

input[type="checkbox"] {
  appearance: none;
  flex: none;
  display: grid;
  place-items: center;
  width: 17px;
  height: 16px;
  margin: 0;
  border: 1px solid #b5b0ad;
  border-radius: 4px;
  background: linear-gradient(#e9e7e5, #d3cfcc);
  box-shadow: 0 1px 1px #999;
}
.row input[type="checkbox"] { margin: 0 9px 0 12px; }
input[type="checkbox"].dim { background: linear-gradient(#d9d5d2, #cbc5c2); }
input[type="checkbox"]:checked::before {
  content: "";
  width: 13px;
  height: 12px;
  background: #222;
  clip-path: polygon(8% 52%, 22% 40%, 42% 66%, 86% 8%, 98% 16%, 44% 94%);
}

.splitter { align-self: center; justify-self: center; width: 2px; height: 10px; background: radial-gradient(circle, #8f8b89 1px, transparent 1px) 0 0 / 2px 4px; }
.canvas { overflow: hidden; border: 1px solid #908b89; border-color: #8a8684 #d8d4d2 #b5afac #8a8684; border-radius: 3px; margin-top: 1px; background: #fff; }
.canvas svg { width: 100%; height: 100%; }
.nodes { fill: none; stroke: none; marker: url(#n); }
.roads { fill: none; stroke: #238594; stroke-width: .8; }
.edge { align-self: center; width: 2px; height: 10px; margin: 0 0 100px 1px; background: radial-gradient(circle, #8f8b89 1px, transparent 1px) 0 0 / 2px 4px; }

.status { display: flex; align-items: center; height: 34px; padding: 0 20px 0 7px; }
.clip { width: 16px; overflow: hidden; }
.sq {
  flex: none;
  width: 18px;
  height: 17px;
  margin-left: 8px;
  border-radius: 4px;
  background: linear-gradient(#eceae8, #cfcac7);
  box-shadow: 0 1px 1px #999;
}
.clip + .sq { margin-left: 2px; }
.sq svg { width: 18px; height: 17px; }
.l-coord { margin: 0 11px 0 10px; }
.field, .combo select {
  height: 16px;
  padding: 0 4px;
  border: 1px solid #aaa4a1;
  border-color: #a39d9a #c9c4c1 #dcd8d6;
  border-radius: 4px;
  background: #fff;
  color: #222;
  font: 12px/14px "DejaVu Sans", sans-serif;
}
.field { flex: 1; min-width: 0; margin: 0 11px 0 0; text-align: center; }
.combo { position: relative; flex: none; margin-left: 16px; }
.combo select { display: block; appearance: none; width: 95px; margin: 0; }
.combo svg { position: absolute; right: 4px; top: 5px; width: 10px; height: 6px; pointer-events: none; }
.sq.stop { margin: 0 10px; }
.l-render { margin: 0 10px 0 5px; }
.epsg { color: #958f8c; }
```
